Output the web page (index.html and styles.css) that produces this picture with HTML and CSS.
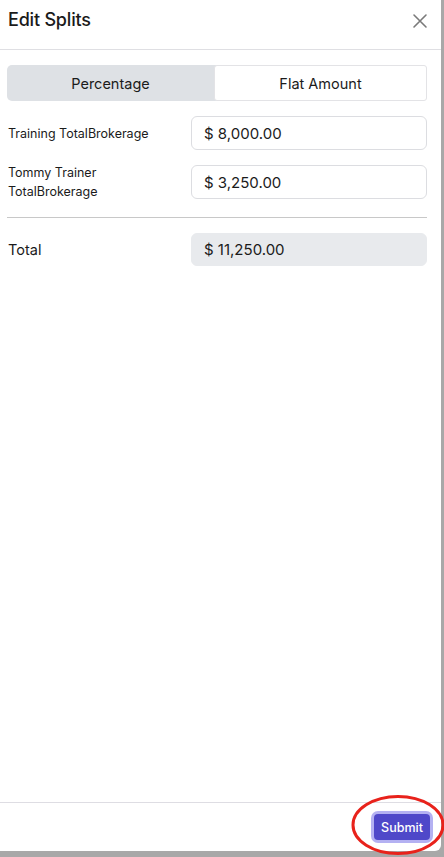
FILE: index.html
```html
<!DOCTYPE html>
<html>
<head>
<meta charset="utf-8">
<link rel="stylesheet" href="styles.css">
</head>
<body>
<div class="panel">
  <header class="header">
    <h1 class="title">Edit Splits</h1>
    <button class="close" aria-label="Close">
      <svg width="16" height="16" viewBox="0 0 16 16"><path d="M2 2 L14 14 M14 2 L2 14" stroke="#7a7a7a" stroke-width="1.6" stroke-linecap="round" fill="none"/></svg>
    </button>
  </header>
  <main class="content">
    <div class="tabs">
      <div class="tab">Percentage</div>
      <div class="tab tab-active">Flat Amount</div>
    </div>
    <div class="row">
      <div class="label">Training TotalBrokerage</div>
      <div class="input">$ 8,000.00</div>
    </div>
    <div class="row">
      <div class="label">Tommy Trainer<br>TotalBrokerage</div>
      <div class="input">$ 3,250.00</div>
    </div>
    <hr class="divider">
    <div class="row row-total">
      <div class="label label-total">Total</div>
      <div class="input input-disabled">$ 11,250.00</div>
    </div>
  </main>
  <footer class="footer">
    <div class="submit-wrap">
      <button class="submit">Submit</button>
      <svg class="annot" width="96" height="62" viewBox="0 0 96 62"><ellipse cx="48" cy="31" rx="45" ry="28.5" fill="none" stroke="#e8221b" stroke-width="3"/></svg>
    </div>
  </footer>
</div>
</body>
</html>
```

FILE: styles.css
```css
* { box-sizing: border-box; }
html, body { margin: 0; padding: 0; }
body {
  background: #a8a8a8;
  width: 444px;
  height: 857px;
  overflow: hidden;
  font-family: Inter, "Liberation Sans", sans-serif;
  color: #1b1b1b;
}
.panel {
  width: 441px;
  height: 851px;
  background: #fff;
  border-bottom-right-radius: 6px;
  display: flex;
  flex-direction: column;
}
.header {
  height: 50px;
  border-bottom: 1px solid #dfdfe3;
  display: flex;
  align-items: flex-start;
  justify-content: space-between;
  padding: 9px 13px 0 8px;
}
.title {
  margin: 0;
  font-size: 18px;
  font-weight: 500;
  line-height: 22px;
  letter-spacing: -0.2px;
}
.close {
  border: 0;
  background: none;
  padding: 0;
  margin-top: 4px;
  width: 16px;
  height: 16px;
  display: flex;
}
.content {
  flex: 1;
  padding: 15px 14px 0 7px;
}
.tabs {
  display: flex;
  height: 36px;
  background: #dee1e5;
  border-radius: 5px;
}
.tab {
  flex: 1;
  display: flex;
  align-items: center;
  justify-content: center;
  font-size: 14.5px;
}
.tab-active {
  background: #fff;
  border: 1px solid #e3e3e6;
  border-radius: 3px;
  flex: 0 0 213px;
}
.row {
  display: flex;
  align-items: center;
  height: 34px;
  margin-top: 15px;
}
.label {
  width: 184px;
  padding-left: 1px;
  font-size: 12.5px;
  line-height: 19px;
}
.label-total { font-size: 14.5px; }
.input {
  flex: 1;
  height: 34px;
  border: 1px solid #dcdde1;
  border-radius: 6px;
  display: flex;
  align-items: center;
  padding-left: 12px;
  font-size: 15px;
}
.input-disabled {
  background: #e8eaed;
  border-color: #e8eaed;
  height: 33px;
}
.divider {
  margin: 18px 0 0 0;
  border: 0;
  border-top: 1px solid #c8c8c8;
}
.row-total { margin-top: 15px; height: 33px; }
.footer {
  height: 49px;
  border-top: 1px solid #dedde3;
  display: flex;
  justify-content: flex-end;
  align-items: flex-start;
  padding: 11px 11px 0 0;
}
.submit-wrap { position: relative; }
.submit {
  width: 56px;
  height: 26px;
  border: 0;
  border-radius: 4px;
  background: #4f48c9;
  color: #fff;
  font-family: Inter, "Liberation Sans", sans-serif;
  font-size: 12.5px;
  font-weight: 500;
  padding: 0;
  box-shadow: 0 0 0 3px #b4b1f2;
}
.annot {
  position: absolute;
  left: -24px;
  top: -20px;
  pointer-events: none;
}
```
